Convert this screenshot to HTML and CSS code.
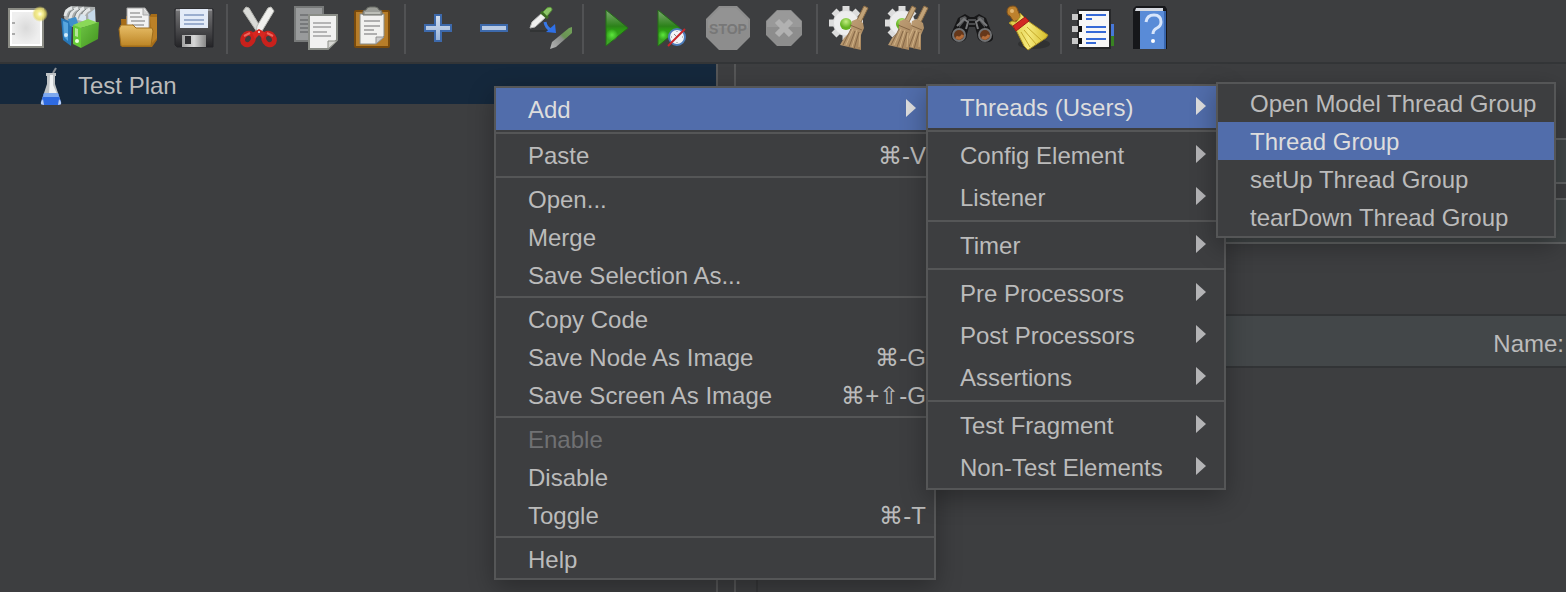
FILE: index.html
```html
<!DOCTYPE html>
<html lang="en">
<head>
    <meta charset="UTF-8">
    <meta name="viewport" content="width=device-width, initial-scale=1.0">
    <title>Test Plan</title>
    <link rel="stylesheet" href="styles.css">
</head>
<body>
    <!-- Toolbar -->
    <header class="toolbar">
        <button class="tool" aria-label="New">
            <svg viewBox="0 0 44 44">
                <defs>
                    <radialGradient id="paper"><stop offset="0" stop-color="#dadada"/><stop offset="1" stop-color="#efefef"/></radialGradient>
                    <radialGradient id="glow"><stop offset="0" stop-color="#fffef0"/><stop offset=".35" stop-color="#f5ee90"/><stop offset=".7" stop-color="#e6da68" stop-opacity=".8"/><stop offset="1" stop-color="#e6da68" stop-opacity="0"/></radialGradient>
                </defs>
                <rect x="5" y="3" width="34" height="38" fill="#fff" stroke="#8b8c85" stroke-width="2"/>
                <rect x="8" y="6" width="28" height="32" fill="url(#paper)"/>
                <path d="M8 16h3v2H8zM8 27h3v2H8z" fill="#aaa"/>
                <circle cx="36" cy="8" r="8" fill="url(#glow)"/>
            </svg>
        </button>
        <button class="tool" aria-label="Templates">
            <svg viewBox="0 0 44 44">
                <defs>
                    <linearGradient id="greenBook" x2="1" y2="1"><stop offset="0" stop-color="#6cc343"/><stop offset="1" stop-color="#43941f"/></linearGradient>
                </defs>
                <path d="M4 12l1-8 6-4 24 1 1 16-25 4z" fill="#a9adad"/>
                <path d="M5 10q1-7 7-8M10 13q1-9 8-11M16 14q1-9 8-12M22 14q1-8 8-11" fill="none" stroke="#e3e6e6" stroke-width="3"/>
                <path d="M8 11q1-6 6-8M14 12q1-6 6-9M20 12q1-6 6-9" fill="none" stroke="#7e8484"/>
                <path d="M28 8l7-5v13l-6 3z" fill="#c6d9e9"/>
                <path d="M1 12l11 4-1 24-8-6z" fill="#2777b8"/>
                <path d="M3 15l5 2v18l-4-4z" fill="#58a6de"/>
                <path d="M8 13l8-2 3 9h-9z" fill="#3f8fcb"/>
                <path d="M18 14l3-6 5 2v6z" fill="#d7e5f0"/>
                <path d="M13 19l8 2v21l-8-4z" fill="#65c936"/>
                <path d="M13 19l15-6 11 4-18 5z" fill="#8ad958"/>
                <path d="M21 22l18-6-1 17-17 9z" fill="url(#greenBook)"/>
                <path d="M15 22l3 1v8l-3-1z" fill="#b5e598"/>
                <circle cx="6" cy="29" r="2" fill="#d5ecfa"/>
                <circle cx="17" cy="35" r="2" fill="#eaffdd"/>
            </svg>
        </button>
        <button class="tool" aria-label="Open">
            <svg viewBox="0 0 44 44">
                <defs>
                    <linearGradient id="folder" x2="0" y2="1"><stop offset="0" stop-color="#e8bf69"/><stop offset="1" stop-color="#bd8525"/></linearGradient>
                </defs>
                <path d="M5 13h5v-3h24l1-2h6v26l-5 7H6z" fill="#a76d18"/>
                <path d="M34 11h7v21l-5 5z" fill="#bc8127"/>
                <path d="M11 2h18l4 6v16H11z" fill="#f2f2f2" stroke="#a2a2a2"/>
                <path d="M27 2v7h6" fill="#d2d2d2" stroke="#aaa"/>
                <path d="M14 7h10M14 11h12M15 15h14M16 19h12" stroke="#b4b4b4" stroke-width="2"/>
                <path d="M3 23l2-4h12l3 3h16l1 3-2 15H5z" fill="url(#folder)" stroke="#a06e1c"/>
            </svg>
        </button>
        <button class="tool" aria-label="Save">
            <svg viewBox="0 0 44 44">
                <defs>
                    <linearGradient id="disk" x2="0" y2="1"><stop offset="0" stop-color="#777779"/><stop offset="1" stop-color="#242427"/></linearGradient>
                    <linearGradient id="shutter" x2="1"><stop offset="0" stop-color="#a1a1a1"/><stop offset=".5" stop-color="#d7d7d7"/><stop offset="1" stop-color="#878787"/></linearGradient>
                </defs>
                <path d="M3 3h38v38H5l-2-2z" fill="url(#disk)" stroke="#252529"/>
                <path d="M4 3h36v2H4z" fill="#99999c"/>
                <rect x="8" y="3" width="28" height="19" fill="#e3ebf8"/>
                <path d="M12 9h20M12 14h20M12 18h20" stroke="#9baecf" stroke-width="2"/>
                <rect x="10" y="29" width="24" height="12" fill="url(#shutter)"/>
                <rect x="13" y="30" width="6" height="8" fill="#303033"/>
            </svg>
        </button>
        <span class="divider"></span>
        <button class="tool" aria-label="Cut">
            <svg viewBox="0 0 44 44">
                <path d="M5 5l3-4 3 1 12 20 1 5-5-1z" fill="#dadbd8" stroke="#b3b3ae"/>
                <path d="M36 5l-3-4-3 1-11 18-1 7 6-2z" fill="#f0f0ee" stroke="#b8b9b4"/>
                <ellipse cx="10" cy="33" rx="5" ry="6" transform="rotate(35 10 33)" fill="none" stroke="#c9211c" stroke-width="5"/>
                <ellipse cx="31" cy="33" rx="5" ry="6" transform="rotate(-35 31 33)" fill="none" stroke="#c9211c" stroke-width="5"/>
                <path d="M14 27l7-4 7 4-3 6-4-4-4 4z" fill="#d72720"/>
                <path d="M6 30l6-3M29 27l6 3" stroke="#ee665d" stroke-width="2"/>
                <circle cx="21" cy="26" r="1" fill="#eee"/>
            </svg>
        </button>
        <button class="tool" aria-label="Copy">
            <svg viewBox="0 0 44 44">
                <path d="M1 1h28v34H1z" fill="#999b9c" stroke="#777979" stroke-width="2"/>
                <path d="M6 9h18M6 14h18M6 18h18M6 22h12M6 26h11" stroke="#77797b" stroke-width="2"/>
                <path d="M15 9h28v25l-9 9H15z" fill="#f1f1f0" stroke="#8a8d87" stroke-width="2"/>
                <path d="M19 17h18M19 21h18M19 26h14M19 30h18" stroke="#b5b5b5" stroke-width="2"/>
                <path d="M34 43v-8h9z" fill="#d6d6d3" stroke="#8a8d87"/>
            </svg>
        </button>
        <button class="tool" aria-label="Paste">
            <svg viewBox="0 0 44 44">
                <rect x="5" y="5" width="34" height="36" rx="1" fill="#b77d29" stroke="#784a0d" stroke-width="2"/>
                <path d="M10 8h24v22l-8 8H10z" fill="#f1f1ef" stroke="#888b86"/>
                <path d="M26 38v-7h8z" fill="#ccc" stroke="#929292"/>
                <path d="M14 15h16M14 20h16M14 24h10M14 28h13" stroke="#afafaf" stroke-width="2"/>
                <path d="M13 9V6q0-2 3-2 1-3 4-3h5q3 0 4 3 3 0 3 2v3z" fill="#9c9e98" stroke="#6c6f68"/>
                <path d="M15 7h15" stroke="#bdbfb8" stroke-width="2"/>
            </svg>
        </button>
        <span class="divider"></span>
        <button class="tool" aria-label="Expand All">
            <svg viewBox="0 0 44 44">
                <defs>
                    <linearGradient id="sign" x2="0" y2="1"><stop offset="0" stop-color="#d6e0ef"/><stop offset="1" stop-color="#97b2d8"/></linearGradient>
                </defs>
                <path d="M19 9h6v10h10v6H25v10h-6V25H9v-6h10z" fill="url(#sign)" stroke="#3d69ab" stroke-width="2"/>
            </svg>
        </button>
        <button class="tool" aria-label="Collapse All">
            <svg viewBox="0 0 44 44">
                <path d="M9 19h26v6H9z" fill="#b9cae4" stroke="#3d69ab" stroke-width="2"/>
            </svg>
        </button>
        <button class="tool" aria-label="Toggle">
            <svg viewBox="0 0 44 44">
                <defs>
                    <linearGradient id="faded" x1="0" y1="1" x2="1" y2="0"><stop offset="0" stop-color="#c4c4c4"/><stop offset=".5" stop-color="#929592"/><stop offset=".6" stop-color="#6f9d56"/><stop offset="1" stop-color="#78ad5c"/></linearGradient>
                </defs>
                <path d="M2 25h18" stroke="#292a2b"/>
                <path d="M2 22l2-6 10-9 4 4L7 21z" fill="#f0f0f0" stroke="#bbb"/>
                <path d="M13 6l7 6" stroke="#3e6b24" stroke-width="3"/>
                <path d="M15 6l4-4q5-2 5 2l-5 6z" fill="#8cc468" stroke="#5a9938"/>
                <path d="M17 16q1 6 6 8" fill="none" stroke="#3979e8" stroke-width="3"/>
                <path d="M27 18l1 9-10-1z" fill="#2e70e8"/>
                <path d="M22 43l2-7L41 22l3-1v6L28 41z" fill="url(#faded)" opacity=".9"/>
            </svg>
        </button>
        <span class="divider"></span>
        <button class="tool" aria-label="Start">
            <svg viewBox="0 0 44 44">
                <defs>
                    <linearGradient id="play" x2="0" y2="1"><stop offset="0" stop-color="#7fab73"/><stop offset=".45" stop-color="#2c8219"/><stop offset=".55" stop-color="#2c9a14"/><stop offset="1" stop-color="#42aa2b"/></linearGradient>
                    <radialGradient id="shine"><stop offset="0" stop-color="#5ce83c"/><stop offset="1" stop-color="#5ce83c" stop-opacity="0"/></radialGradient>
                </defs>
                <path d="M12 4l22 18-22 18z" fill="url(#play)" stroke="#246e17"/>
                <circle cx="18" cy="29" r="6" fill="url(#shine)"/>
            </svg>
        </button>
        <button class="tool" aria-label="Start no pauses">
            <svg viewBox="0 0 44 44">
                <path d="M8 4l22 18L8 40z" fill="url(#play)" stroke="#246e17"/>
                <circle cx="13" cy="29" r="5" fill="url(#shine)"/>
                <circle cx="27" cy="31" r="8" fill="#f2f4f7" stroke="#4c7cbb" stroke-width="2"/>
                <path d="M27 25v1M27 36v1M21 31h1M32 31h1M24 28l3 3 3-3" stroke="#888" fill="none"/>
                <path d="M18 40l17-17" stroke="#c8262a" stroke-width="2"/>
            </svg>
        </button>
        <button class="tool" aria-label="Stop" disabled>
            <svg viewBox="0 0 44 44">
                <path d="M13 0h18l13 13v18L31 44H13L0 31V13z" fill="#8d8d8d"/>
                <path d="M14 2h16l12 12v8H2v-8z" fill="#939393"/>
                <text x="22" y="28" class="stop-text">STOP</text>
            </svg>
        </button>
        <button class="tool" aria-label="Shutdown" disabled>
            <svg viewBox="0 0 44 44">
                <path d="M15 4h14l11 11v14L29 40H15L4 29V15z" fill="#8d8d8d"/>
                <path d="M15 5h14l10 10v6H5v-6z" fill="#999"/>
                <path d="M15 15l14 14M29 15L15 29" stroke="#b1b1b1" stroke-width="6"/>
            </svg>
        </button>
        <span class="divider"></span>
        <button class="tool" aria-label="Clear">
            <svg viewBox="0 0 44 44">
                <defs>
                    <radialGradient id="led" cy=".3"><stop offset="0" stop-color="#c3ee82"/><stop offset="1" stop-color="#65b322"/></radialGradient>
                    <linearGradient id="straw" x2="1" y2="1"><stop offset="0" stop-color="#c4a57d"/><stop offset="1" stop-color="#a5835a"/></linearGradient>
                    <g id="cog">
                        <circle cx="18" cy="17" r="13" fill="#dcdcdc"/>
                        <path d="M18 0v34M1 17h34M6 5l24 24M30 5L6 29" stroke="#dcdcdc" stroke-width="7" stroke-linejoin="round"/>
                        <circle cx="18" cy="17" r="12" fill="#ededed"/>
                        <circle cx="18" cy="18" r="6" fill="url(#led)"/>
                    </g>
                    <g id="broom">
                        <path d="M36 0l4 2-7 14-4-2z" fill="#c2a378" stroke="#8b6b45"/>
                        <path d="M24 15l5-2 6 4 1 5-3 7v15l-21-5 4-7 6-6z" fill="url(#straw)"/>
                        <path d="M23 23l-8 16M27 25l-6 16M31 26l-5 17M22 19l12 5" stroke="#856746"/>
                        <path d="M25 23l-7 16M29 24l-5 17M32 27l-1 14" stroke="#d0b185"/>
                    </g>
                </defs>
                <use href="#cog"/>
                <use href="#broom"/>
            </svg>
        </button>
        <button class="tool" aria-label="Clear All">
            <svg viewBox="0 0 44 44">
                <use href="#cog"/>
                <use href="#broom" x="4"/>
                <use href="#broom" x="-8"/>
            </svg>
        </button>
        <span class="divider"></span>
        <button class="tool" aria-label="Search">
            <svg viewBox="0 0 44 44">
                <path d="M8 12l7-4 5 3h4l5-3 7 4 7 18q1 7-8 6-8 0-8-8l-2-7h-6l-2 7q0 8-8 8-8 0-8-8z" fill="#171718"/>
                <path d="M10 12l5-2 2 2-8 10zM34 12l-5-2-2 2 8 10z" fill="#58595b"/>
                <path d="M7 20l7-7 4 3-2 7M37 20l-7-7-4 3 2 7" fill="none" stroke="#77787a" stroke-width="2"/>
                <path d="M18 14h8M19 18h6" stroke="#4b4c4e" stroke-width="2"/>
                <circle cx="9" cy="29" r="6" fill="#65371a" stroke="#707173" stroke-width="2"/>
                <circle cx="35" cy="29" r="6" fill="#65371a" stroke="#707173" stroke-width="2"/>
                <path d="M6 31q4 3 7-2M32 31q4 3 7-2" fill="none" stroke="#b36b38" stroke-width="3"/>
            </svg>
        </button>
        <button class="tool" aria-label="Reset Search">
            <svg viewBox="0 0 44 44">
                <defs>
                    <linearGradient id="sweep" x2="1"><stop offset="0" stop-color="#d9c840"/><stop offset=".5" stop-color="#f5e97c"/><stop offset="1" stop-color="#d7bd29"/></linearGradient>
                </defs>
                <ellipse cx="28" cy="38" rx="16" ry="5" fill="#303132"/>
                <path d="M1 6q0-6 6-6 4 0 5 5l3 7-7 4-4-6q-3-1-3-4z" fill="#bd812d" stroke="#80501a"/>
                <circle cx="6" cy="5" r="2" fill="#e2b670"/>
                <path d="M3 17l3-2 4 1 4-5V7l3 3 5 5 20 14-2 3-18 12-4-4-7-14-4-6z" fill="url(#sweep)" stroke="#a88e22"/>
                <path d="M7 20l12-9 4 4-13 10z" fill="#d22823" stroke="#a01a18"/>
                <path d="M15 26l9 15M18 24l12 14M21 21l14 13" stroke="#c4a92b"/>
            </svg>
        </button>
        <span class="divider"></span>
        <button class="tool" aria-label="Function Helper">
            <svg viewBox="0 0 44 44">
                <path d="M38 18h4v12h-4z" fill="#4778d9"/>
                <path d="M38 30h4v10h-4z" fill="#388322"/>
                <path d="M6 4h32v38H6z" fill="#f7f7f7" stroke="#27282a" stroke-width="2"/>
                <path d="M0 8h10v6H0zM0 20h10v6H0zM0 32h10v6H0z" fill="#c8c8c8"/>
                <path d="M6 8h4v6H6zM6 20h4v6H6zM6 32h4v6H6z" fill="#111"/>
                <path d="M14 9h20M14 21h20M14 26h20M14 33h20M14 13h6M14 37h10" stroke="#3569d7" stroke-width="2"/>
            </svg>
        </button>
        <button class="tool" aria-label="Help">
            <svg viewBox="0 0 44 44">
                <path d="M5 3l3-3h29l2 3v40H5z" fill="#16171a"/>
                <path d="M8 2h27v3H7z" fill="#d6d9df"/>
                <path d="M12 5h26v38H12z" fill="#598bd7"/>
                <path d="M36 5h2v38h-2z" fill="#3866ae"/>
                <path d="M18 16q1-7 8-7 7 0 7 7 0 4-4 6-4 2-4 6" fill="none" stroke="#d7e5fb" stroke-width="3"/>
                <circle cx="25" cy="35" r="2" fill="#fff"/>
            </svg>
        </button>
    </header>

    <main class="workspace">
        <aside class="tree">
            <a href="#plan" class="tree-node">
                <svg viewBox="0 0 24 38" class="flask">
                    <path d="M14 6l3-5" stroke="#8a8f94" stroke-width="2"/>
                    <path d="M7 6h10v3h-1v8l6 18q1 3-3 3H5q-4 0-3-3l6-18V9H7z" fill="#bfc3c5"/>
                    <path d="M11 8h3v10l4 9h-8z" fill="#eff1f2"/>
                    <path d="M5 26h14l3 9q1 3-3 3H5q-4 0-3-3z" fill="#2e6ae1"/>
                    <path d="M5 26h14l1 4H4z" fill="#7ea9ee"/>
                    <path d="M2 35l2-3 1 6-3-1zM22 35l-2-3-1 6 3-1z" fill="#b9cef3"/>
                </svg>
                Test Plan
            </a>
        </aside>
        <div class="splitter"></div>
        <section class="editor" id="plan">
            <input type="text" class="field" aria-label="Name">
            <input type="text" class="field" aria-label="Comments">
            <table class="variables">
                <thead>
                    <tr><th>Name:</th></tr>
                </thead>
            </table>
        </section>
    </main>

    <!-- Context menu -->
    <nav class="menu menu-main">
        <button class="item parent active">Add</button>
        <hr>
        <button class="item">Paste <kbd>⌘-V</kbd></button>
        <hr>
        <button class="item">Open...</button>
        <button class="item">Merge</button>
        <button class="item">Save Selection As...</button>
        <hr>
        <button class="item">Copy Code</button>
        <button class="item">Save Node As Image <kbd>⌘-G</kbd></button>
        <button class="item">Save Screen As Image <kbd>⌘+⇧-G</kbd></button>
        <hr>
        <button class="item" disabled>Enable</button>
        <button class="item">Disable</button>
        <button class="item">Toggle <kbd>⌘-T</kbd></button>
        <hr>
        <button class="item">Help</button>
    </nav>

    <nav class="menu menu-add">
        <button class="item parent active">Threads (Users)</button>
        <hr>
        <button class="item parent">Config Element</button>
        <button class="item parent">Listener</button>
        <hr>
        <button class="item parent">Timer</button>
        <hr>
        <button class="item parent">Pre Processors</button>
        <button class="item parent">Post Processors</button>
        <button class="item parent">Assertions</button>
        <hr>
        <button class="item parent">Test Fragment</button>
        <button class="item parent">Non-Test Elements</button>
    </nav>

    <nav class="menu menu-threads">
        <button class="item">Open Model Thread Group</button>
        <button class="item active">Thread Group</button>
        <button class="item">setUp Thread Group</button>
        <button class="item">tearDown Thread Group</button>
    </nav>
</body>
</html>
```
FILE: styles.css
```css
* {
    margin: 0;
    padding: 0;
    box-sizing: border-box;
}

body {
    display: flex;
    flex-direction: column;
    height: 100vh;
    overflow: hidden;
    background: #3d3e40;
    color: #bbb;
    font-family: "Liberation Sans", Arial, sans-serif;
    font-size: 24px;
}

button, input {
    font: inherit;
    color: inherit;
    border: none;
    background: none;
}

/* Toolbar */
.toolbar {
    display: flex;
    align-items: flex-start;
    gap: 4px;
    height: 64px;
    padding-top: 4px;
    border-bottom: 2px solid #333537;
}

.tool {
    display: flex;
    flex: none;
    justify-content: center;
    width: 52px;
    padding-top: 2px;
}

.tool svg {
    width: 44px;
    height: 44px;
    overflow: visible;
}

.divider {
    flex: none;
    width: 2px;
    height: 50px;
    margin: 0 2px;
    background: #515254;
}

.stop-text {
    font-size: 14px;
    font-weight: bold;
    text-anchor: middle;
    fill: #777;
}

/* Workspace */
.workspace {
    display: flex;
    flex: 1;
}

.tree {
    width: 718px;
    border-right: 2px solid #555657;
}

.tree-node {
    display: flex;
    align-items: center;
    gap: 15px;
    height: 40px;
    padding: 4px 0 0 39px;
    background: #15283c;
    color: inherit;
    text-decoration: none;
}

.flask {
    width: 24px;
    height: 38px;
}

.splitter {
    width: 18px;
    border-right: 2px solid #555657;
}

.editor {
    flex: 1;
    margin: 40px 0 0 20px;
    padding-top: 34px;
    border-left: 2px solid #353638;
}

.field {
    display: block;
    width: 100%;
    height: 46px;
    margin-bottom: 14px;
    background: #424748;
    border: 2px solid #606263;
    border-right: none;
}

.variables {
    width: 100%;
    margin-top: 70px;
    border-collapse: collapse;
}

.variables th {
    height: 52px;
    padding: 6px 2px 0 0;
    background: #434749;
    border-top: 2px solid #323436;
    border-bottom: 2px solid #323436;
    font-weight: normal;
    text-align: right;
}

/* Menus */
.menu {
    position: absolute;
    background: #3d3e40;
    border: 2px solid #555657;
    box-shadow: 0 8px 24px rgba(0, 0, 0, 0.3);
}

.menu-main {
    top: 86px;
    left: 494px;
    width: 442px;
}

.menu-add {
    top: 84px;
    left: 926px;
    width: 300px;
}

.menu-threads {
    top: 82px;
    left: 1216px;
    width: 340px;
}

.menu hr {
    height: 2px;
    margin: 2px 0;
    border: none;
    background: #555657;
}

.item {
    display: flex;
    align-items: center;
    justify-content: space-between;
    width: 100%;
    height: 38px;
    padding: 2px 8px 0 32px;
    text-align: left;
    white-space: nowrap;
}

.item kbd {
    font: inherit;
}

.item:disabled {
    color: #707173;
}

.parent {
    height: 42px;
    padding-right: 18px;
}

.parent::after {
    content: "";
    border: 9px solid transparent;
    border-left: 10px solid #b4b4b6;
    border-right: none;
    margin-bottom: 4px;
}

.active {
    background: #516dab;
    color: #ddd;
}

.active::after {
    border-left-color: #ddd;
}
```
